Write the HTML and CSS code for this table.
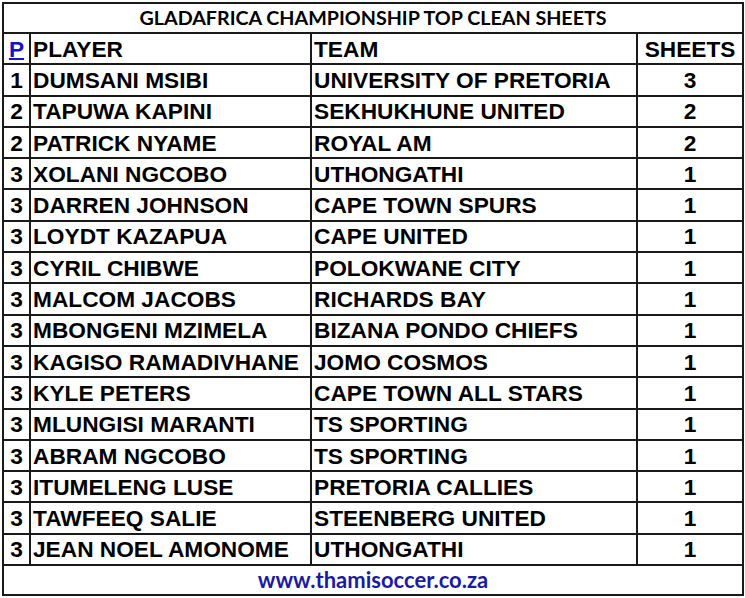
FILE: index.html
```html
<!DOCTYPE html>
<html>
<head>
<meta charset="utf-8">
<link rel="stylesheet" href="styles.css">
</head>
<body>
<table class="board">
  <colgroup><col class="c-pos"><col class="c-player"><col class="c-team"><col class="c-num"></colgroup>
  <tr class="title-row"><td colspan="4" class="title">GLADAFRICA CHAMPIONSHIP TOP CLEAN SHEETS</td></tr>
  <tr class="row"><td class="pos"><a class="plink">P</a></td><td>PLAYER</td><td>TEAM</td><td class="num">SHEETS</td></tr>
  <tr class="row"><td class="pos">1</td><td>DUMSANI MSIBI</td><td>UNIVERSITY OF PRETORIA</td><td class="num">3</td></tr>
  <tr class="row"><td class="pos">2</td><td>TAPUWA KAPINI</td><td>SEKHUKHUNE UNITED</td><td class="num">2</td></tr>
  <tr class="row"><td class="pos">2</td><td>PATRICK NYAME</td><td>ROYAL AM</td><td class="num">2</td></tr>
  <tr class="row"><td class="pos">3</td><td>XOLANI NGCOBO</td><td>UTHONGATHI</td><td class="num">1</td></tr>
  <tr class="row"><td class="pos">3</td><td>DARREN JOHNSON</td><td>CAPE TOWN SPURS</td><td class="num">1</td></tr>
  <tr class="row"><td class="pos">3</td><td>LOYDT KAZAPUA</td><td>CAPE UNITED</td><td class="num">1</td></tr>
  <tr class="row"><td class="pos">3</td><td>CYRIL CHIBWE</td><td>POLOKWANE CITY</td><td class="num">1</td></tr>
  <tr class="row"><td class="pos">3</td><td>MALCOM JACOBS</td><td>RICHARDS BAY</td><td class="num">1</td></tr>
  <tr class="row"><td class="pos">3</td><td>MBONGENI MZIMELA</td><td>BIZANA PONDO CHIEFS</td><td class="num">1</td></tr>
  <tr class="row"><td class="pos">3</td><td>KAGISO RAMADIVHANE</td><td>JOMO COSMOS</td><td class="num">1</td></tr>
  <tr class="row"><td class="pos">3</td><td>KYLE PETERS</td><td>CAPE TOWN ALL STARS</td><td class="num">1</td></tr>
  <tr class="row"><td class="pos">3</td><td>MLUNGISI MARANTI</td><td>TS SPORTING</td><td class="num">1</td></tr>
  <tr class="row"><td class="pos">3</td><td>ABRAM NGCOBO</td><td>TS SPORTING</td><td class="num">1</td></tr>
  <tr class="row"><td class="pos">3</td><td>ITUMELENG LUSE</td><td>PRETORIA CALLIES</td><td class="num">1</td></tr>
  <tr class="row"><td class="pos">3</td><td>TAWFEEQ SALIE</td><td>STEENBERG UNITED</td><td class="num">1</td></tr>
  <tr class="row"><td class="pos">3</td><td>JEAN NOEL AMONOME</td><td>UTHONGATHI</td><td class="num">1</td></tr>
  <tr class="footer-row"><td colspan="4" class="footer">www.thamisoccer.co.za</td></tr>
</table>
</body>
</html>
```
FILE: styles.css
```css
html, body {
  margin: 0;
  padding: 0;
  background: #ffffff;
}
body {
  padding: 2px 0 0 2px;
}
.board {
  border-collapse: collapse;
  width: 740px;
  table-layout: fixed;
  font-family: "Liberation Sans", Arial, sans-serif;
  font-weight: bold;
  color: #000;
  border: 2px solid #1a1a1a;
}
.c-pos { width: 27px; }
.c-player { width: 281px; }
.c-team { width: 326px; }
.c-num { width: 106px; }
.board td {
  border: 2px solid #1a1a1a;
  padding: 0 0 0 2px;
  white-space: nowrap;
  overflow: hidden;
  font-size: 22.7px;
  line-height: 22px;
  vertical-align: middle;
}
.board tr.row td { height: 29.3px; }
.board td.pos { text-align: center; padding: 0; }
.board td.num { text-align: center; padding: 0; }
.title-row td.title {
  height: 28px;
  text-align: center;
  font-family: "Lato", "Open Sans", sans-serif;
  font-size: 19.7px;
  font-weight: 700;
  padding: 0;
}
.footer-row td.footer {
  height: 28px;
  text-align: center;
  font-family: "Lato", "Open Sans", sans-serif;
  font-size: 22px;
  font-weight: 700;
  color: #1a1aa6;
  padding: 0;
}
.plink {
  color: #1515c8;
  text-decoration: underline;
  text-decoration-thickness: 2px;
}
```
